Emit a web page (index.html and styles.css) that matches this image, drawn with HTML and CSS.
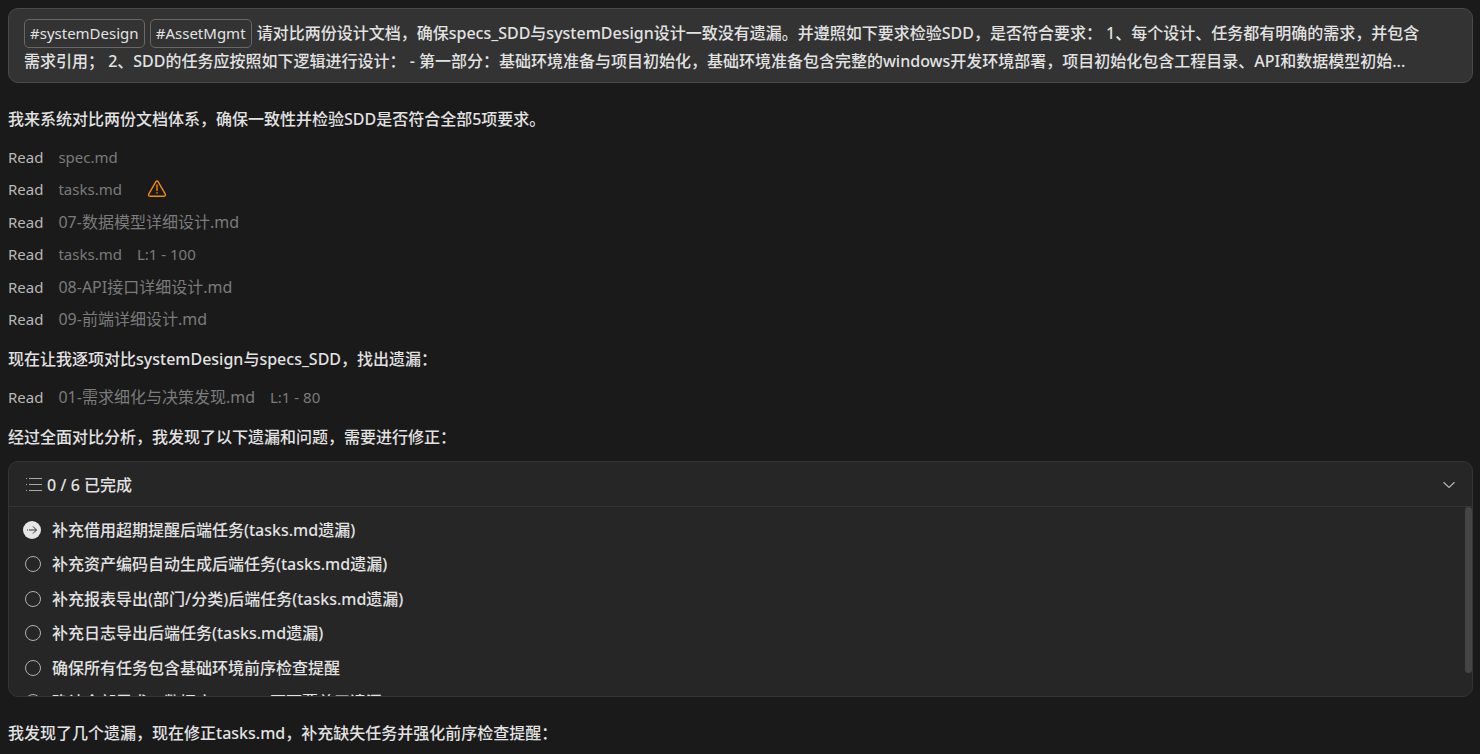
FILE: index.html
```html
<!DOCTYPE html>
<html lang="zh-CN">
<head>
  <meta charset="UTF-8" />
  <meta name="viewport" content="width=device-width, initial-scale=1.0" />
  <title>SDD 检验</title>
  <link rel="stylesheet" href="styles.css">
</head>
<body>
  <main class="chat">
    <section class="prompt">
      <p class="prompt-text"><span class="tag">#systemDesign</span> <span class="tag">#AssetMgmt</span> 请对比两份设计文档，确保specs_SDD与systemDesign设计一致没有遗漏。并遵照如下要求检验SDD，是否符合要求： 1、每个设计、任务都有明确的需求，并包含<br>需求引用； 2、SDD的任务应按照如下逻辑进行设计： - 第一部分：基础环境准备与项目初始化，基础环境准备包含完整的windows开发环境部署，项目初始化包含工程目录、API和数据模型初始...</p>
    </section>

    <p class="message">我来系统对比两份文档体系，确保一致性并检验SDD是否符合全部5项要求。</p>

    <ul class="reads">
      <li><span class="action">Read</span><span class="latin">spec.md</span></li>
      <li>
        <span class="action">Read</span><span class="latin">tasks.md</span>
        <svg class="warning" width="20" height="18" viewBox="0 0 20 18" fill="none" stroke="#f38b0a" stroke-width="1.4" stroke-linejoin="round" stroke-linecap="round">
          <path d="M8.8 1.8 1.7 14.2Q1 16.2 3 16.2H17Q19 16.2 18.3 14.2L11.2 1.8Q10 .3 8.8 1.8Z"/>
          <path d="M10 5v5.5M10 12.6v.4"/>
        </svg>
      </li>
      <li><span class="action">Read</span><span>07-数据模型详细设计.md</span></li>
      <li><span class="action">Read</span><span class="latin">tasks.md</span><span class="latin">L:1 - 100</span></li>
      <li><span class="action">Read</span><span>08-API接口详细设计.md</span></li>
      <li><span class="action">Read</span><span>09-前端详细设计.md</span></li>
    </ul>

    <p class="message">现在让我逐项对比systemDesign与specs_SDD，找出遗漏：</p>

    <ul class="reads">
      <li><span class="action">Read</span><span>01-需求细化与决策发现.md</span><span class="latin">L:1 - 80</span></li>
    </ul>

    <p class="message">经过全面对比分析，我发现了以下遗漏和问题，需要进行修正：</p>

    <section class="todo">
      <button class="todo-header" type="button">
        <svg width="16" height="16" viewBox="0 0 16 16" fill="none" stroke="#a8a8a8" stroke-width="1">
          <path d="M0 1.5h1M3 1.5h13M0 7.5h1M3 7.5h13M0 13.5h1M3 13.5h13"/>
        </svg>
        <span>0 / 6 已完成</span>
        <svg class="chevron" width="12" height="8" viewBox="0 0 12 8" fill="none" stroke="#b4b4b4" stroke-width="1.2">
          <path d="M.5 1.2 6 6.5l5.5-5.3"/>
        </svg>
      </button>
      <div class="todo-body">
        <ul class="todo-list">
          <li>
            <svg class="status" width="18" height="18" viewBox="0 0 18 18">
              <circle cx="9" cy="9" r="9" fill="#e6e6e6"/>
              <path d="M4 9h1M6 9h7.5M10 5.5 13.5 9 10 12.5" fill="none" stroke="#333" stroke-width="1"/>
            </svg>
            <span>补充借用超期提醒后端任务(tasks.md遗漏)</span>
          </li>
          <li><span class="status circle"></span><span>补充资产编码自动生成后端任务(tasks.md遗漏)</span></li>
          <li><span class="status circle"></span><span>补充报表导出(部门/分类)后端任务(tasks.md遗漏)</span></li>
          <li><span class="status circle"></span><span>补充日志导出后端任务(tasks.md遗漏)</span></li>
          <li><span class="status circle"></span><span>确保所有任务包含基础环境前序检查提醒</span></li>
          <li><span class="status circle"></span><span>确认全部需求、数据库、API、页面覆盖无遗漏</span></li>
        </ul>
        <div class="scrollbar"></div>
      </div>
    </section>

    <p class="message">我发现了几个遗漏，现在修正tasks.md，补充缺失任务并强化前序检查提醒：</p>
  </main>
</body>
</html>
```
FILE: styles.css
```css
* {
  box-sizing: border-box;
}
body {
  margin: 0;
  background-color: #1a1a1a;
  color: #e2e2e2;
  font-family: "Noto Sans", "Noto Sans CJK SC", sans-serif;
  font-size: 16px;
  line-height: 24px;
  overflow: hidden;
}
p, ul {
  margin: 0;
  padding: 0;
}
ul {
  list-style: none;
}
.chat {
  padding: 8px 7px 8px 8px;
}
.prompt {
  padding: 10px 15px 7px;
  border: 1px solid #4a4a4a;
  border-radius: 10px;
  background-color: #333;
  overflow: hidden;
}
.prompt-text {
  line-height: 27px;
  font-weight: 500;
  white-space: nowrap;
}
.tag {
  display: inline-block;
  margin-right: 1px;
  padding: 0 5px;
  border: 1px solid #686868;
  border-radius: 5px;
  font-size: 15px;
  font-weight: 400;
  line-height: 27px;
}
.message {
  font-weight: 500;
}
.prompt + .message {
  margin: 24px 0 10px;
}
.reads + .message {
  margin: 12px 0 10px;
}
.reads li {
  display: flex;
  align-items: center;
  gap: 15px;
  height: 32px;
  color: #7b7b7b;
}
.reads li:nth-child(even),
.todo-list li:nth-child(even) {
  margin-bottom: 1px;
}
.reads .action {
  color: #b8b8b8;
  font-size: 15px;
}
.latin {
  font-size: 15px;
}
.warning {
  margin-left: 10px;
}
.todo {
  margin-top: 12px;
  border: 1px solid #343434;
  border-radius: 10px;
  background-color: #262626;
  overflow: hidden;
}
.todo-header {
  display: flex;
  align-items: center;
  gap: 5px;
  width: 100%;
  height: 45px;
  padding: 2px 17px 0;
  border: 0;
  border-bottom: 1px solid #343434;
  background: none;
  color: inherit;
  font: inherit;
  font-weight: 500;
}
.chevron {
  margin-left: auto;
}
.todo-body {
  position: relative;
  height: 189px;
  padding: 6px 14px;
  overflow: hidden;
}
.todo-list li {
  display: flex;
  align-items: center;
  gap: 11px;
  height: 34px;
  font-weight: 500;
}
.status {
  width: 18px;
  height: 18px;
}
.circle {
  width: 16px;
  height: 16px;
  margin: 0 0 0 2px;
  border: 1px solid #b0b0b0;
  border-radius: 50%;
}
.scrollbar {
  position: absolute;
  top: 0;
  right: 0;
  width: 7px;
  height: 166px;
  border-radius: 4px;
  background-color: #454545;
}
.todo + .message {
  margin-top: 24px;
}
```
